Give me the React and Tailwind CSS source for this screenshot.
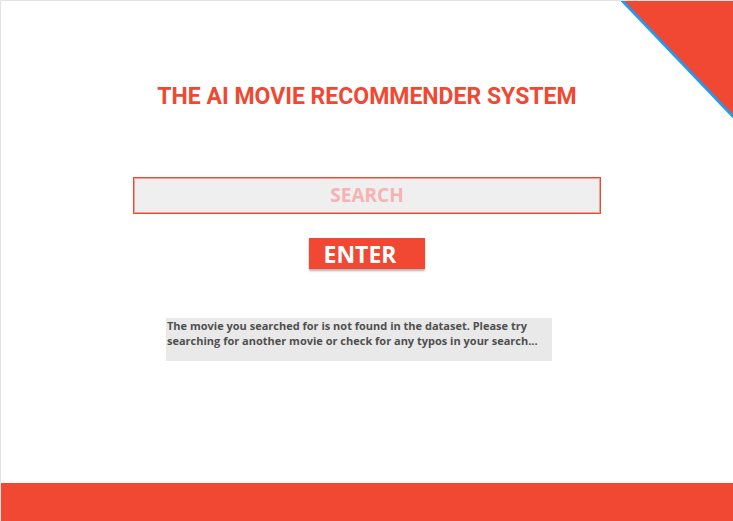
export default function App() {
  return (
    <div className="relative flex min-h-screen flex-col border-t border-l border-[#e3e3e3] bg-white font-['Open_Sans',sans-serif]">
      <svg
        className="absolute top-0 right-0 h-[118px] w-[112px]"
        viewBox="0 0 112 118"
        aria-hidden="true"
      >
        <path d="M1 0H112V116Z" fill="#f04832" />
        <path d="M0.5 -1L112.5 116" stroke="#1e9bf5" strokeWidth="2.8" fill="none" />
      </svg>

      <main className="flex grow flex-col items-center px-[132px]">
        <h1 className="mt-20 text-center font-['Roboto',sans-serif] text-[23px] leading-[32px] font-bold whitespace-nowrap text-[#f04832]">
          THE AI MOVIE RECOMMENDER SYSTEM
        </h1>

        <form className="mt-16 flex w-full flex-col items-center" onSubmit={(e) => e.preventDefault()}>
          <input
            type="text"
            aria-label="Search"
            placeholder="SEARCH"
            className="h-[37px] w-full border border-[#f04832] bg-[#efefef] pb-0.5 text-center text-[19px] font-bold text-[#f04832] shadow-[inset_0_0_0_1px_#f0a09a] outline-none placeholder:text-[#f6b3b3] placeholder:opacity-100"
          />
          <button
            type="submit"
            className="mt-6 h-[31px] w-[116px] bg-[#f04832] pr-3.5 text-center text-[23px] leading-[32px] font-bold text-white shadow-[0_2px_2px_rgba(0,0,0,0.3)]"
          >
            ENTER
          </button>
        </form>

        <p
          role="status"
          className="mt-[49px] mr-4 h-[43px] w-[386px] max-w-full bg-[#e9e9e9] px-px text-[11px] leading-[15px] font-bold text-[#4f4f4f]"
        >
          The movie you searched for is not found in the dataset. Please try searching for another movie or check for any typos in your search...
        </p>
      </main>

      <footer className="h-[38px] bg-[#f04832]" />
    </div>
  );
}
